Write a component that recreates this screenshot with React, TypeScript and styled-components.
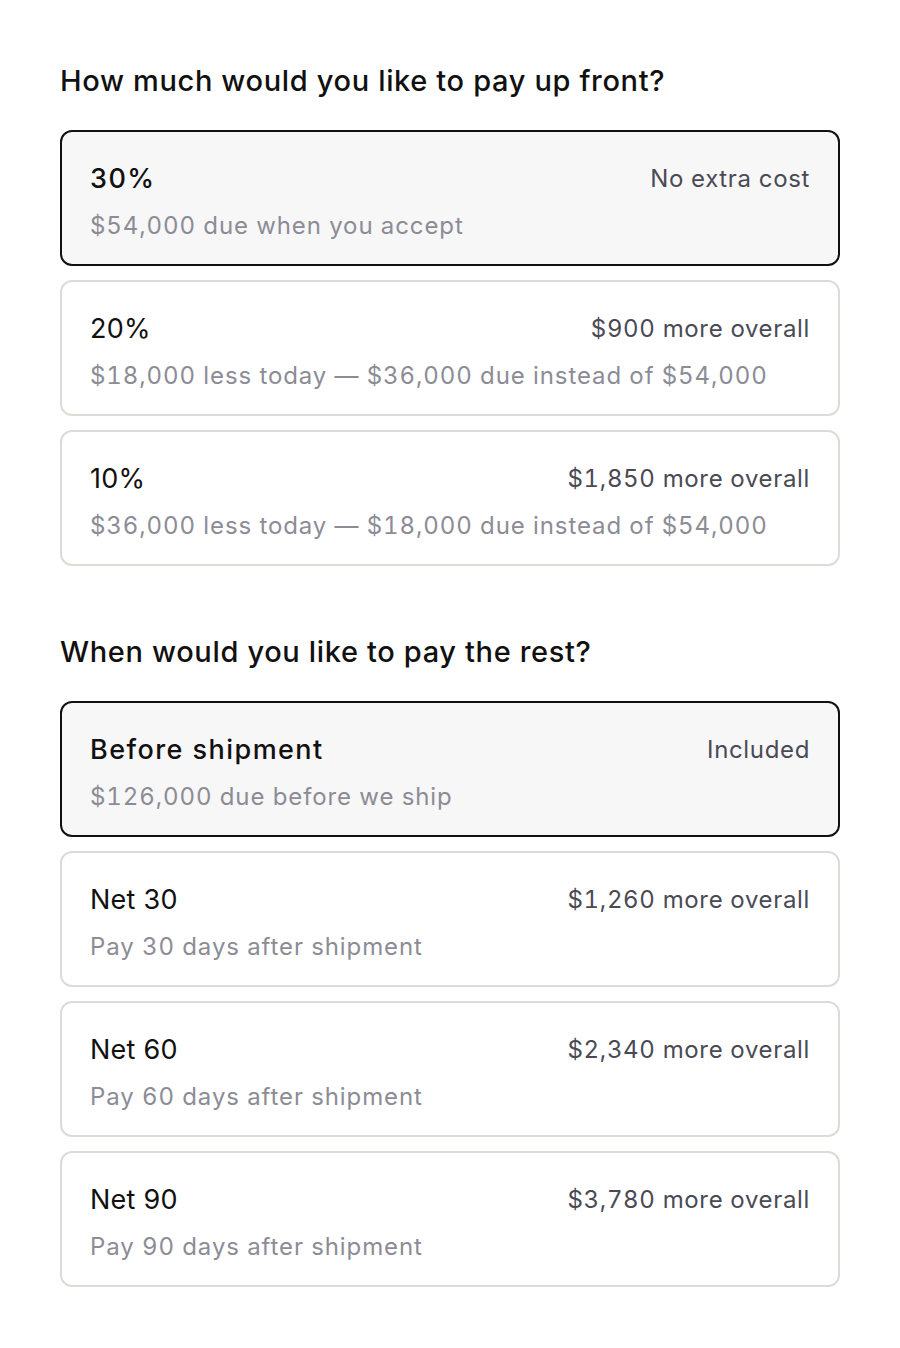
import React from "react";
import styled, { createGlobalStyle } from "styled-components";

const GlobalStyle = createGlobalStyle`
  html, body {
    margin: 0;
    padding: 0;
    background: #ffffff;
  }
  body {
    font-family: Inter, "Noto Sans", "Liberation Sans", sans-serif;
    -webkit-font-smoothing: antialiased;
  }
`;

const Page = styled.div`
  padding: 63px 60px 60px;
  display: flex;
  flex-direction: column;
  gap: 68px;
`;

const Section = styled.section`
  display: flex;
  flex-direction: column;
`;

const Heading = styled.h2`
  margin: 0 0 31px;
  font-size: 29px;
  line-height: 36px;
  font-weight: 500;
  color: #111111;
  letter-spacing: 0.65px;
`;

const OptionList = styled.div`
  display: flex;
  flex-direction: column;
  gap: 14px;
`;

const OptionCard = styled.button<{ $selected?: boolean }>`
  all: unset;
  box-sizing: border-box;
  display: flex;
  flex-direction: column;
  gap: 12px;
  padding: 28px 28px 22px;
  border-radius: 12px;
  border: 2px solid ${(p) => (p.$selected ? "#111111" : "#dcdcd6")};
  background: ${(p) => (p.$selected ? "#f7f7f7" : "#ffffff")};
  cursor: pointer;
`;

const TopRow = styled.div`
  display: flex;
  align-items: center;
  justify-content: space-between;
  height: 38px;
`;

const Title = styled.span<{ $selected?: boolean }>`
  font-size: 27px;
  line-height: 38px;
  font-weight: ${(p) => (p.$selected ? 500 : 400)};
  color: #111111;
  letter-spacing: ${(p) => (p.$selected ? "1.45px" : "0.25px")};
`;

const Cost = styled.span`
  font-size: 24px;
  line-height: 38px;
  color: #4a4a55;
  letter-spacing: 0.65px;
  font-variant-numeric: tabular-nums;
`;

const Detail = styled.span`
  font-size: 24px;
  line-height: 32px;
  color: #8c8c96;
  letter-spacing: 0.9px;
  font-variant-numeric: tabular-nums;
`;

type Option = { title: string; cost: string; detail: string; selected?: boolean };

const upfront: Option[] = [
  { title: "30%", cost: "No extra cost", detail: "$54,000 due when you accept", selected: true },
  { title: "20%", cost: "$900 more overall", detail: "$18,000 less today — $36,000 due instead of $54,000" },
  { title: "10%", cost: "$1,850 more overall", detail: "$36,000 less today — $18,000 due instead of $54,000" },
];

const remainder: Option[] = [
  { title: "Before shipment", cost: "Included", detail: "$126,000 due before we ship", selected: true },
  { title: "Net 30", cost: "$1,260 more overall", detail: "Pay 30 days after shipment" },
  { title: "Net 60", cost: "$2,340 more overall", detail: "Pay 60 days after shipment" },
  { title: "Net 90", cost: "$3,780 more overall", detail: "Pay 90 days after shipment" },
];

function OptionGroup({ heading, options }: { heading: string; options: Option[] }) {
  return (
    <Section>
      <Heading>{heading}</Heading>
      <OptionList role="radiogroup">
        {options.map((o) => (
          <OptionCard key={o.title} $selected={o.selected} role="radio" aria-checked={!!o.selected}>
            <TopRow>
              <Title $selected={o.selected}>{o.title}</Title>
              <Cost>{o.cost}</Cost>
            </TopRow>
            <Detail>{o.detail}</Detail>
          </OptionCard>
        ))}
      </OptionList>
    </Section>
  );
}

export default function App() {
  return (
    <>
      <GlobalStyle />
      <Page>
        <OptionGroup heading="How much would you like to pay up front?" options={upfront} />
        <OptionGroup heading="When would you like to pay the rest?" options={remainder} />
      </Page>
    </>
  );
}
